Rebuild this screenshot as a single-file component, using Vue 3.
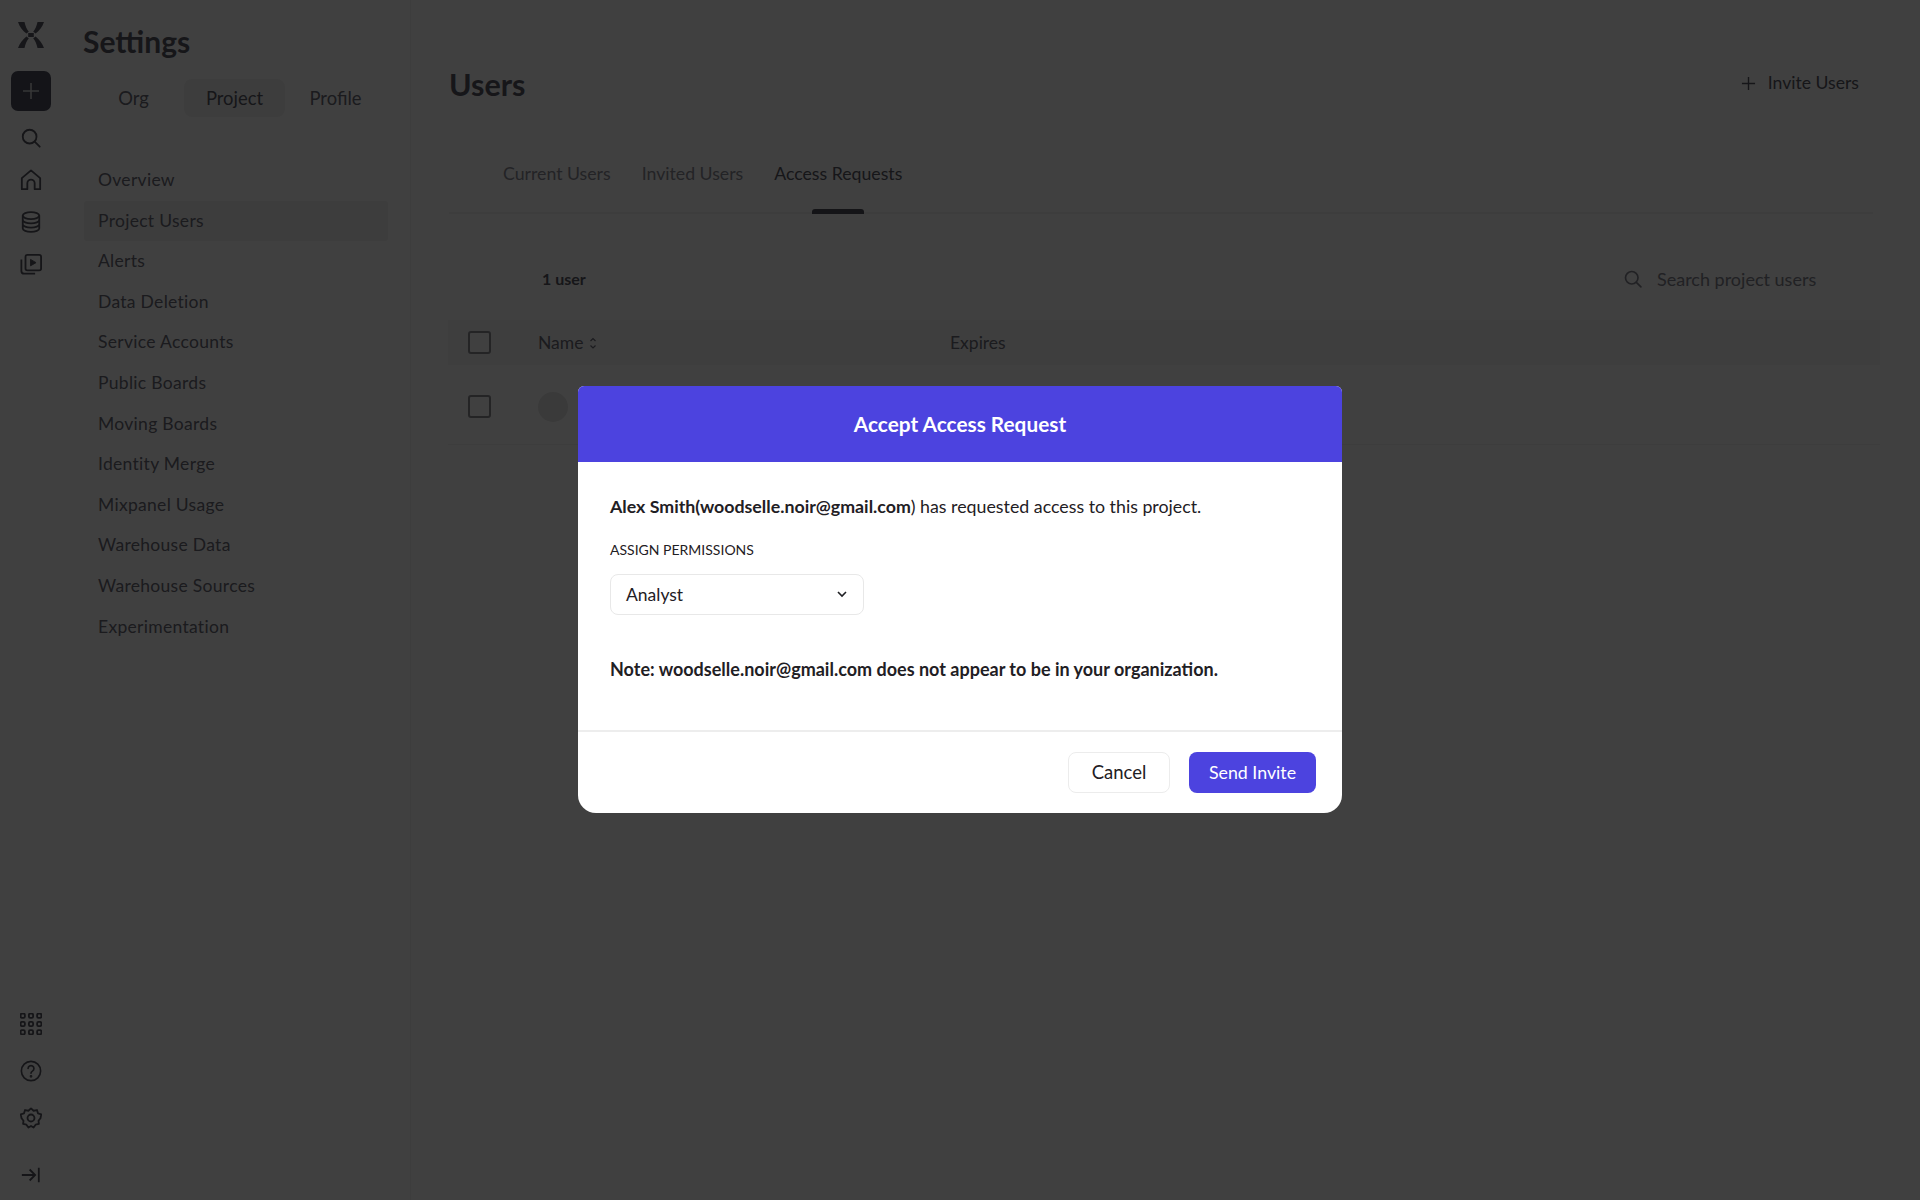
<template>
  <div class="page">
    <!-- left icon rail -->
    <aside class="rail">
      <svg class="logo" viewBox="0 0 28 28" fill="currentColor">
        <path d="M1 1h6.500c.8 4 2.300 7.200 4.300 9.800L9.400 12.600C5.600 9.500 2.600 5.800 1 1z" />
        <path d="M27 1h-6.500c-.8 4-2.300 7.200-4.300 9.800l2.400 1.800C22.400 9.500 25.400 5.800 27 1z" />
        <path d="M1 27h6.500c.8-4 2.300-7.200 4.300-9.800L9.400 15.400C5.600 18.500 2.600 22.200 1 27z" />
        <path d="M27 27h-6.500c-.8-4-2.300-7.200-4.300-9.800l2.400-1.800C22.400 18.500 25.400 22.200 27 27z" />
        <rect x="11.200" y="12" width="5.600" height="4" />
      </svg>
      <button class="add-btn">
        <svg viewBox="0 0 20 20" fill="none" stroke="currentColor" stroke-width="1.600"><path d="M10 2v16M2 10h16" /></svg>
      </button>
      <div class="rail-icons">
        <svg viewBox="0 0 24 24" fill="none" stroke="currentColor" stroke-width="2" stroke-linecap="round">
          <circle cx="10.500" cy="10.500" r="7.500" /><path d="M16 16l5.500 5.500" />
        </svg>
        <svg viewBox="0 0 24 24" fill="none" stroke="currentColor" stroke-width="2" stroke-linejoin="round">
          <path d="M2 22V10L12 1.500 22 10v12h-6v-6.500a4 4 0 0 0-8 0V22z" />
        </svg>
        <svg viewBox="0 0 24 24" fill="none" stroke="currentColor" stroke-width="2">
          <ellipse cx="12" cy="5" rx="9" ry="3.800" />
          <path d="M3 5v14c0 2.100 4 3.800 9 3.800s9-1.700 9-3.800V5M3 9.700c0 2.100 4 3.800 9 3.800s9-1.700 9-3.800M3 14.400c0 2.100 4 3.800 9 3.800s9-1.700 9-3.800" />
        </svg>
        <svg viewBox="0 0 24 24" fill="none" stroke="currentColor" stroke-width="2" stroke-linejoin="round">
          <rect x="6" y="2" width="17" height="17" rx="2" />
          <path d="M1.500 7v12.500a3 3 0 0 0 3 3h12" />
          <path d="M11.500 7l6 3.500-6 3.500z" fill="currentColor" stroke-width="1" />
        </svg>
      </div>
      <div class="rail-bottom">
        <svg class="ico" viewBox="0 0 24 24" fill="none" stroke="currentColor" stroke-width="2">
          <template v-for="y in [3, 12, 21]" :key="y">
            <rect v-for="x in [3, 12, 21]" :key="x" :x="x - 2.300" :y="y - 2.300" width="4.600" height="4.600" rx="1.400" />
          </template>
        </svg>
        <svg class="ico help" viewBox="0 0 24 24" fill="none" stroke="currentColor" stroke-width="1.800" stroke-linecap="round">
          <circle cx="12" cy="12" r="10.500" />
          <path d="M8.800 9.300a3.200 3.200 0 1 1 4.800 2.800c-1 .6-1.600 1.200-1.600 2.400" />
          <circle cx="12" cy="17.800" r=".6" />
        </svg>
        <svg class="ico gear" viewBox="0 0 24 24" fill="none" stroke="currentColor" stroke-width="2" stroke-linejoin="round">
          <path d="M12 1.500l2.800 2.600 3.700-.8 1.100 3.600 3.600 1.100-.8 3.700.1.300-2.300 3 .4 3.400-3.600.9-2.200 3.100L12 20.700l-2.800 1.700L7 19.300l-3.600-.9.400-3.400-2.300-3 .1-.3-.8-3.700 3.600-1.100 1.100-3.600 3.700.8z" />
          <circle cx="12" cy="12" r="3.800" />
        </svg>
        <svg class="ico collapse" viewBox="0 0 24 24" fill="none" stroke="currentColor" stroke-width="2">
          <path d="M2 12h14M10.500 6l6 6-6 6M20.500 4v16" />
        </svg>
      </div>
    </aside>

    <!-- settings panel -->
    <nav class="panel">
      <h2>Settings</h2>
      <div class="scope-tabs">
        <span v-for="t in scopes" :key="t" class="scope" :class="{ on: t === 'Project' }">{{ t }}</span>
      </div>
      <ul class="menu">
        <li v-for="item in menu" :key="item" :class="{ on: item === 'Project Users' }">{{ item }}</li>
      </ul>
    </nav>

    <!-- users page -->
    <main class="main">
      <header class="main-head">
        <h1>Users</h1>
        <span class="invite">
          <svg viewBox="0 0 16 16" fill="none" stroke="currentColor" stroke-width="1.500"><path d="M8 1v14M1 8h14" /></svg>
          Invite Users
        </span>
      </header>
      <div class="tabs">
        <span v-for="t in tabs" :key="t" class="tab" :class="{ on: t === 'Access Requests' }">{{ t }}</span>
      </div>
      <div class="toolbar">
        <span class="count">1 user</span>
        <div class="search">
          <svg viewBox="0 0 24 24" fill="none" stroke="currentColor" stroke-width="2" stroke-linecap="round">
            <circle cx="10.500" cy="10.500" r="7.500" /><path d="M16 16l5.500 5.500" />
          </svg>
          <span>Search project users</span>
        </div>
      </div>
      <div class="table">
        <div class="row head">
          <span class="check"></span>
          <span class="name">Name
            <svg class="sort" viewBox="0 0 8 14" fill="none" stroke="currentColor" stroke-width="1.200"><path d="M1.500 5L4 2.500 6.500 5M1.500 9.500L4 12l2.500-2.500" /></svg>
          </span>
          <span class="expires">Expires</span>
        </div>
        <div class="row body">
          <span class="check"></span>
          <span class="avatar"></span>
        </div>
      </div>
    </main>

    <!-- modal -->
    <div class="overlay">
      <section class="modal">
        <div class="modal-head">Accept Access Request</div>
        <div class="modal-body">
          <p class="msg"><b>Alex Smith(woodselle.noir@gmail.com</b>) has requested access to this project.</p>
          <div class="label">ASSIGN PERMISSIONS</div>
          <div class="select">
            <span>Analyst</span>
            <svg viewBox="0 0 12 12" fill="none" stroke="currentColor" stroke-width="1.600"><path d="M2 4l4 4 4-4" /></svg>
          </div>
          <p class="note">Note: woodselle.noir@gmail.com does not appear to be in your organization.</p>
        </div>
        <div class="modal-foot">
          <button class="btn cancel">Cancel</button>
          <button class="btn send">Send Invite</button>
        </div>
      </section>
    </div>
  </div>
</template>

<script setup>
const scopes = ['Org', 'Project', 'Profile']
const tabs = ['Current Users', 'Invited Users', 'Access Requests']
const menu = [
  'Overview',
  'Project Users',
  'Alerts',
  'Data Deletion',
  'Service Accounts',
  'Public Boards',
  'Moving Boards',
  'Identity Merge',
  'Mixpanel Usage',
  'Warehouse Data',
  'Warehouse Sources',
  'Experimentation'
]
</script>

<style>
html, body {
  margin: 0;
  background: #fff;
}
</style>

<style scoped>
.page {
  position: relative;
  display: flex;
  width: 1920px;
  height: 1200px;
  overflow: hidden;
  font-family: Lato, "Open Sans", sans-serif;
  color: #6b6b78;
  background: #fff;
}

.rail {
  flex: none;
  width: 61px;
  display: flex;
  flex-direction: column;
  align-items: center;
  box-sizing: border-box;
  padding-top: 21px;
  color: #55555f;
}
.logo { width: 28px; height: 28px; color: #5a5a66; }
.add-btn {
  width: 40px;
  height: 40px;
  margin-top: 22px;
  border: 0;
  border-radius: 7px;
  background: #4f5060;
  color: #d8d8d8;
  display: flex;
  align-items: center;
  justify-content: center;
  padding: 0;
}
.add-btn svg { width: 20px; height: 20px; }
.rail-icons {
  display: flex;
  flex-direction: column;
  gap: 20px;
  margin-top: 16px;
}
.rail-icons svg { width: 22px; height: 22px; display: block; }
.rail-bottom {
  margin-top: auto;
  display: flex;
  flex-direction: column;
  align-items: center;
  padding-bottom: 14px;
}
.ico { width: 22px; height: 22px; display: block; }
.help { margin-top: 25px; }
.gear { margin-top: 25px; }
.collapse { margin-top: 35px; }

.panel {
  flex: none;
  width: 350px;
  box-sizing: border-box;
  padding: 23px 22px 0 22px;
  background: #fff;
  border-right: 1px solid #f4f4f4;
}
.panel h2 {
  margin: 0;
  font-size: 30px;
  line-height: 36px;
  font-weight: 700;
  color: #5a5a66;
}
.scope-tabs {
  display: flex;
  margin-top: 20px;
}
.scope {
  width: 101px;
  height: 38px;
  line-height: 38px;
  text-align: center;
  font-size: 18.400px;
  border-radius: 8px;
}
.scope.on { background: #f3f3f3; color: #5a5a66; }
.menu {
  list-style: none;
  margin: 43px 0 0 1px;
  padding: 0;
}
.menu li {
  height: 40.600px;
  line-height: 40.600px;
  padding-left: 14px;
  font-size: 17.500px;
  letter-spacing: .3px;
}
.menu li.on { background: #f3f3f3; border-radius: 3px; }

.main {
  flex: 1;
  min-width: 0;
  box-sizing: border-box;
  padding: 0 40px 0 38px;
}
.main-head {
  display: flex;
  justify-content: space-between;
  align-items: flex-start;
  height: 170px;
  padding-top: 63px;
  margin-bottom: -32px;
  box-sizing: border-box;
}
.main-head h1 {
  margin: 0;
  font-size: 30.500px;
  line-height: 42px;
  font-weight: 700;
  color: #5a5a66;
}
.invite {
  display: flex;
  align-items: center;
  gap: 12px;
  font-size: 17.600px;
  line-height: 40px;
  color: #5a5a66;
  margin-right: 21px;
}
.invite svg { width: 15px; height: 15px; }
.tabs {
  display: flex;
  gap: 31px;
  height: 76px;
  box-sizing: border-box;
  margin-right: 7px;
  padding-left: 54px;
  border-bottom: 2px solid #f2f2f2;
}
.tab {
  position: relative;
  font-size: 17.700px;
  line-height: 72px;
  color: #8c8c96;
}
.tab.on { color: #5a5a66; }
.tab.on::after {
  content: "";
  position: absolute;
  left: 50%;
  margin-left: -26px;
  width: 52px;
  bottom: -2px;
  height: 5px;
  border-radius: 3px 3px 0 0;
  background: #50505c;
}
.toolbar {
  display: flex;
  align-items: center;
  justify-content: space-between;
  height: 107px;
  box-sizing: border-box;
  padding: 22px 25px 0 93px;
}
.count { font-size: 16px; font-weight: 700; color: #5a5a66; }
.search {
  display: flex;
  align-items: center;
  gap: 14px;
  width: 238px;
  height: 42px;
  box-sizing: border-box;
  padding-left: 6px;
  font-size: 18px;
  color: #85858f;
  background: #fdfdfd;
}
.search svg { width: 20px; height: 20px; }
.table { margin-left: -1px; }
.row {
  display: flex;
  align-items: center;
  padding-left: 20px;
}
.row.head { height: 45px; background: #f7f7f7; margin-top: -1px; }
.row.body { height: 80px; border-bottom: 1px solid #f4f4f4; align-items: flex-start; padding-top: 30px; box-sizing: border-box; }
.check {
  flex: none;
  width: 19px;
  height: 19px;
  border: 2px solid #8e8e95;
  border-radius: 3px;
  background: #fff;
}
.name {
  width: 412px;
  margin-left: 47px;
  font-size: 17.500px;
  display: flex;
  align-items: center;
  gap: 6px;
}
.sort { width: 8px; height: 14px; }
.expires { font-size: 17.500px; }
.avatar {
  width: 30px;
  height: 30px;
  margin-left: 47px;
  margin-top: -3px;
  border-radius: 50%;
  background: #e6e6e6;
}

.overlay {
  position: absolute;
  inset: 0;
  box-sizing: border-box;
  padding-bottom: 2px;
  display: flex;
  align-items: center;
  justify-content: center;
  background: rgba(0, 0, 0, .75);
}
.modal {
  width: 764px;
  height: 427px;
  display: flex;
  flex-direction: column;
  background: #fff;
  border-radius: 6px 6px 18px 18px;
  color: #1f2024;
}
.modal-head {
  flex: none;
  height: 76px;
  line-height: 76px;
  text-align: center;
  background: #4c43df;
  color: #fff;
  font-size: 20.800px;
  font-weight: 700;
  border-radius: 6px 6px 0 0;
}
.modal-body {
  flex: 1;
  box-sizing: border-box;
  padding: 32px 32px 0;
  border-bottom: 2px solid #ededed;
}
.msg {
  margin: 0;
  font-size: 17.800px;
  line-height: 24px;
}
.msg b { font-weight: 700; }
.label {
  margin-top: 22px;
  font-size: 14px;
  line-height: 20px;
}
.select {
  display: flex;
  align-items: center;
  justify-content: space-between;
  width: 254px;
  height: 41px;
  margin-top: 14px;
  box-sizing: border-box;
  padding: 0 15px;
  border: 1px solid #e8e8e8;
  border-radius: 8px;
  font-size: 17.500px;
}
.select svg { width: 12px; height: 12px; }
.note {
  margin: 42px 0 0;
  font-size: 18px;
  line-height: 24px;
  font-weight: 700;
}
.modal-foot {
  flex: none;
  height: 81px;
  display: flex;
  justify-content: flex-end;
  align-items: center;
  gap: 19px;
  padding-right: 26px;
  box-sizing: border-box;
}
.btn {
  height: 41px;
  border-radius: 8px;
  font-family: inherit;
  font-size: 17.800px;
  padding: 0;
}
.cancel { width: 102px; font-size: 18.500px; background: #fff; border: 1px solid #ececec; color: #1f2024; }
.send { width: 127px; background: #4c43df; border: 0; color: #fff; }
</style>
